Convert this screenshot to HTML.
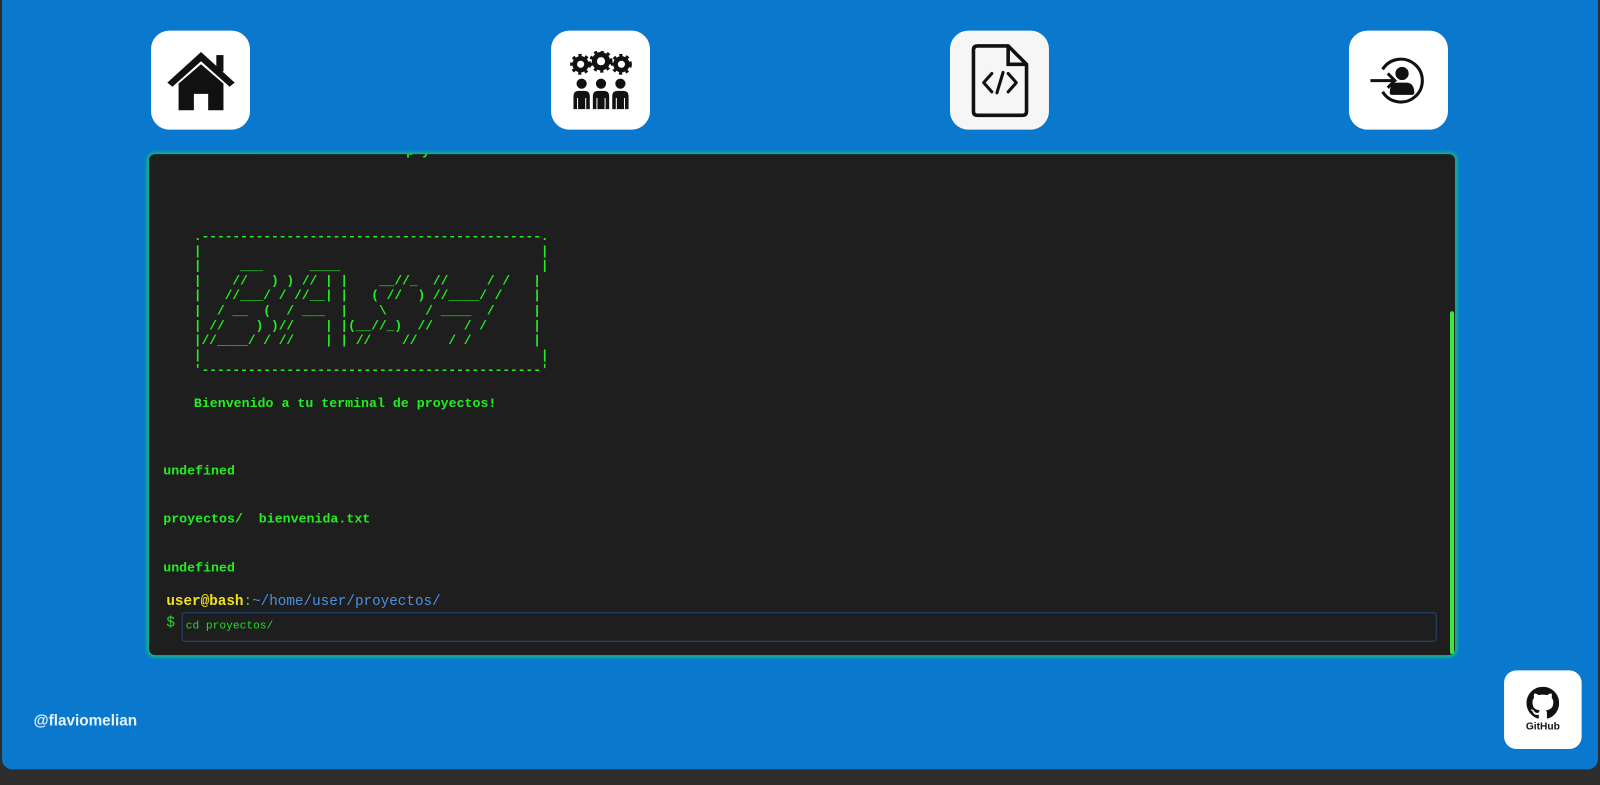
<!DOCTYPE html>
<html><head><meta charset="utf-8"><style>
html,body{margin:0;padding:0;}
body{background:#2d2d2d;overflow:hidden;}
.wrap{position:relative;width:1600px;height:769px;overflow:hidden;background:#2d2d2d;transform:scale(1.0204);transform-origin:0 0;}
.page{position:absolute;left:2px;top:0;width:1564px;height:754px;background:#0a78cc;border-radius:0 0 10px 10px;}
.btn{position:absolute;width:97px;height:97px;background:#fff;border-radius:18px;display:flex;align-items:center;justify-content:center;}
.term{position:absolute;left:144px;top:151px;width:1280px;height:491px;background:#1e1e1e;border-radius:6px;box-shadow:0 0 4px 1px #19d46a;overflow:hidden;font-family:"Liberation Mono",monospace;}
.g{color:#22ee22;font-weight:bold;font-size:13px;position:absolute;white-space:pre;}
.scroll{position:absolute;right:1px;top:154px;width:4px;height:336px;background:#3ee63e;border-radius:2px;}
</style></head><body>
<div class="wrap">
<div class="page">
<div class="btn" style="left:146px;top:30px">
<svg width="70" height="62" viewBox="0 0 70 62"><path d="M35 3 L2 33 L7 37 L35 12 L63 37 L68 33 Z" fill="#111"/><rect x="50" y="6" width="7" height="16" fill="#111"/><path d="M13 34 L35 15 L57 34 V60 H42 V44 H28 V60 H13 Z" fill="#111"/></svg>
</div>
<div class="btn" style="left:538px;top:30px">
<svg width="62" height="58" viewBox="0 0 62 58">
<g fill="#111"><circle cx="11" cy="13" r="8"/><circle cx="31" cy="10" r="9"/><circle cx="51" cy="13" r="8"/>
<g stroke="#111" stroke-width="3.5" stroke-dasharray="3 3.3"><circle cx="11" cy="13" r="8.5" fill="none"/><circle cx="31" cy="10" r="9.5" fill="none"/><circle cx="51" cy="13" r="8.5" fill="none"/></g></g>
<g fill="#fff"><circle cx="11" cy="13" r="3.5"/><circle cx="31" cy="10" r="4"/><circle cx="51" cy="13" r="3.5"/></g>
<g fill="#111"><circle cx="12" cy="32" r="5"/><circle cx="31" cy="32" r="5"/><circle cx="50" cy="32" r="5"/>
<path d="M4 57 V44 Q4 39 9 39 H15 Q20 39 20 44 V57Z"/><path d="M23 57 V44 Q23 39 28 39 H34 Q39 39 39 44 V57Z"/><path d="M42 57 V44 Q42 39 47 39 H53 Q58 39 58 44 V57Z"/></g>
<g stroke="#fff" stroke-width="1"><line x1="8" y1="46" x2="8" y2="57"/><line x1="16" y1="46" x2="16" y2="57"/><line x1="27" y1="46" x2="27" y2="57"/><line x1="35" y1="46" x2="35" y2="57"/><line x1="46" y1="46" x2="46" y2="57"/><line x1="54" y1="46" x2="54" y2="57"/></g>
</svg>
</div>
<div class="btn" style="left:929px;top:30px;background:#f6f6f6">
<svg width="60" height="74" viewBox="0 0 60 74"><path d="M8 3 H38 L56 21 V67 Q56 71 52 71 H8 Q4 71 4 67 V7 Q4 3 8 3Z" fill="none" stroke="#111" stroke-width="3.5" stroke-linejoin="round"/><path d="M38 3 V21 H56" fill="none" stroke="#111" stroke-width="3.5"/><path d="M22 30 L14 39 L22 48 M38 30 L46 39 L38 48 M33 29 L27 49" fill="none" stroke="#111" stroke-width="3" stroke-linecap="round" stroke-linejoin="round"/></svg>
</div>
<div class="btn" style="left:1320px;top:30px">
<svg width="60" height="50" viewBox="0 0 60 50"><path d="M14 14 A21 21 0 1 1 14 36" fill="none" stroke="#111" stroke-width="3"/><path d="M2 25 H26 M19 18 L26 25 L19 32" fill="none" stroke="#111" stroke-width="3"/><circle cx="33" cy="18" r="6.5" fill="#111"/><path d="M21 37 Q21 27 29 27 H37 Q45 27 45 37 Q45 39 43 39 H23 Q21 39 21 37Z" fill="#111"/></svg>
</div>

<div class="term">
<div class="g" style="left:252px;top:-10px">p y</div>
<div class="g" style="left:44px;top:74px;font-size:12.6px;line-height:14.6px;font-weight:bold">.--------------------------------------------.
|                                            |
|     ___      ____                          |
|    //   ) ) // | |    __//_  //     / /   |
|   //___/ / //__| |   ( //  ) //____/ /    |
|  / __  (  / ___  |    \     / ____  /     |
| //    ) )//    | |(__//_)  //    / /      |
|//____/ / //    | | //    //    / /        |
|                                            |
'--------------------------------------------'</div>
<div class="g" style="left:44px;top:237px">Bienvenido a tu terminal de proyectos!</div>
<div class="g" style="left:14px;top:303px">undefined</div>
<div class="g" style="left:14px;top:350px">proyectos/  bienvenida.txt</div>
<div class="g" style="left:14px;top:398px">undefined</div>
<div style="position:absolute;left:17px;top:431px;font-size:14px;font-family:'Liberation Mono',monospace;white-space:pre"><b style="color:#f0e020">user@bash</b><span style="color:#22dd22">:</span><span style="color:#4a8fe0">~/home/user/proyectos/</span></div>
<div style="position:absolute;left:17px;top:452px;color:#22dd22;font-size:14px">$</div>
<div style="position:absolute;left:32px;top:449px;width:1225px;height:27px;border:1px solid #1f4a78;border-radius:3px;color:#22dd22;font-size:11px;line-height:27px;padding-left:3px">cd proyectos/</div>
<div class="scroll"></div>
</div>

<div style="position:absolute;left:31px;top:698px;color:#e6f2ff;font:bold 15px 'Liberation Sans',sans-serif">@flaviomelian</div>
<div class="btn" style="left:1472px;top:657px;width:76px;height:77px;border-radius:12px;flex-direction:column">
<svg width="32" height="32" viewBox="0 0 16 16"><path fill="#111" d="M8 0C3.580 0 0 3.580 0 8c0 3.540 2.290 6.530 5.470 7.590.4.07.55-.17.55-.38 0-.19-.01-.82-.01-1.490-2.010.37-2.530-.49-2.690-.94-.09-.23-.48-.94-.82-1.130-.28-.15-.68-.52-.01-.53.63-.01 1.080.58 1.230.82.72 1.210 1.870.87 2.330.66.07-.52.28-.87.51-1.070-1.780-.2-3.640-.89-3.640-3.950 0-.87.31-1.590.82-2.150-.08-.2-.36-1.020.08-2.120 0 0 .67-.21 2.200.82.64-.18 1.320-.27 2-.27.68 0 1.360.09 2 .27 1.530-1.040 2.200-.82 2.200-.82.44 1.100.16 1.920.08 2.120.51.56.82 1.270.82 2.150 0 3.070-1.870 3.750-3.650 3.950.29.25.54.73.54 1.480 0 1.070-.01 1.930-.01 2.200 0 .21.15.46.55.38A8.013 8.013 0 0016 8c0-4.420-3.580-8-8-8z"/></svg>
<div style="font:bold 10px 'Liberation Sans',sans-serif;color:#111;margin-top:2px">GitHub</div>
</div>
</div>
</div>
</body></html>
